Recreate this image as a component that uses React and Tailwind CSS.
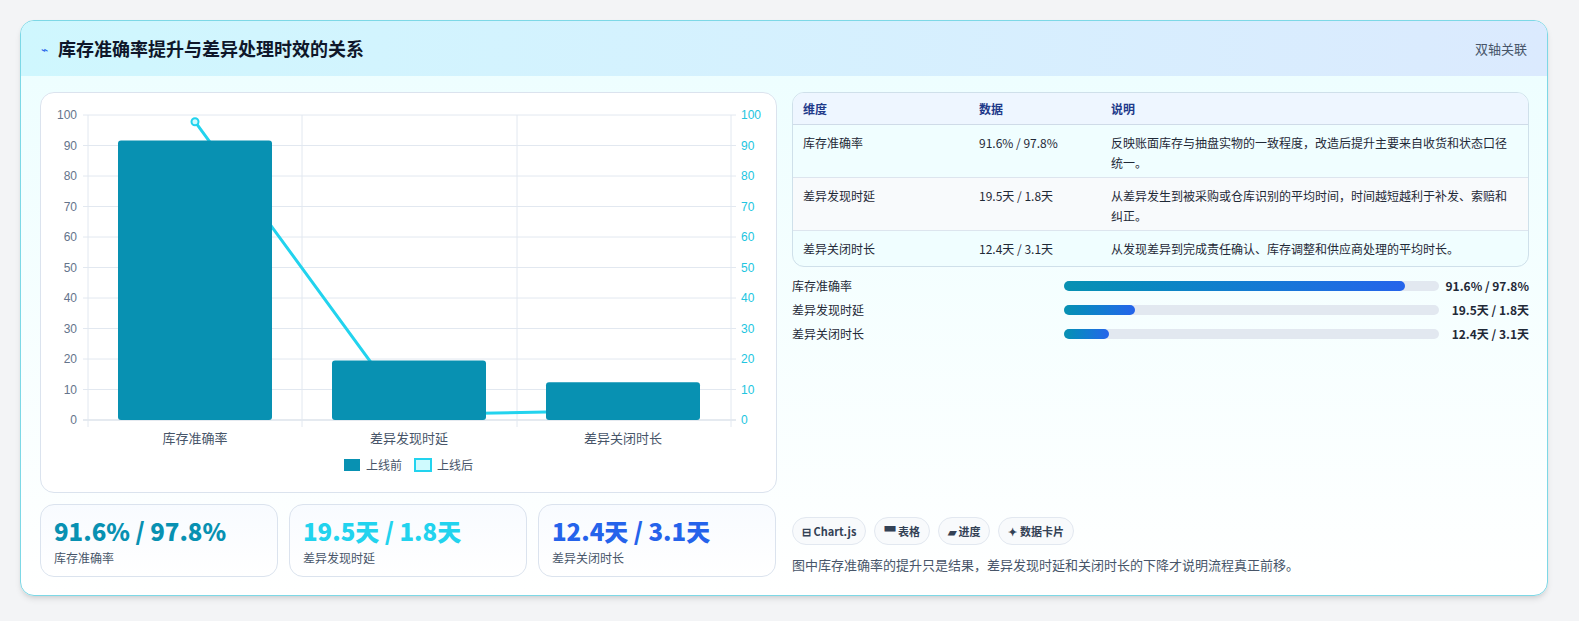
export default function App() {
  const F = { fontFamily: '"Noto Sans CJK SC", "Noto Sans", sans-serif' };
  const y = (v) => 419 - v * 3.05;
  const gridY = [0, 10, 20, 30, 40, 50, 60, 70, 80, 90, 100];
  const bars = [
    { c: 194, v: 91.6, l: "库存准确率" },
    { c: 408, v: 19.5, l: "差异发现时延" },
    { c: 622, v: 12.4, l: "差异关闭时长" },
  ];
  const after = [97.8, 1.8, 3.1];
  const rows = [
    ["库存准确率", "91.6% / 97.8%", "反映账面库存与抽盘实物的一致程度，改造后提升主要来自收货和状态口径统一。"],
    ["差异发现时延", "19.5天 / 1.8天", "从差异发生到被采购或仓库识别的平均时间，时间越短越利于补发、索赔和纠正。"],
    ["差异关闭时长", "12.4天 / 3.1天", "从发现差异到完成责任确认、库存调整和供应商处理的平均时长。"],
  ];
  const prog = [
    ["库存准确率", 91, "91.6% / 97.8%", 272],
    ["差异发现时延", 19, "19.5天 / 1.8天", 274],
    ["差异关闭时长", 12, "12.4天 / 3.1天", 274],
  ];
  return (
    <div className="w-[1579px] h-[621px] bg-[#f3f4f6] pt-[20px] pl-[20px]" style={F}>
      <div className="w-[1528px] h-[576px] rounded-[14px] border border-[#7dd8e6] bg-gradient-to-b from-[#ecfeff] to-white overflow-hidden shadow-md">
        <div className="h-[55px] flex items-center justify-between px-[20px] bg-gradient-to-r from-[#cff7fe] to-[#dbeafe]">
          <div className="flex items-center gap-[10px]">
            <span className="text-[#2563eb] text-[12px]">⌁</span>
            <span className="text-[18px] font-bold text-[#0f172a]">库存准确率提升与差异处理时效的关系</span>
          </div>
          <span className="text-[13px] text-[#475569]">双轴关联</span>
        </div>
        <div className="flex gap-[15px] px-[19px] pt-[16px]">
          <div className="w-[737px] flex flex-col gap-[11px]">
            <div className="h-[401px] rounded-[14px] border border-[#dbe3ee] bg-white relative">
              <svg width="737" height="401" viewBox="40 92 737 401" style={{ fontFamily: '"Liberation Sans", sans-serif' }}>
                {gridY.map((g) => (
                  <g key={g}>
                    <line x1="82" x2="735" y1={y(g)} y2={y(g)} stroke={g === 0 ? "#cbd5e1" : "#e2e8f0"} />
                    <text x="76" y={y(g) + 4} fontSize="12" fill="#64748b" textAnchor="end">{g}</text>
                    <text x="740" y={y(g) + 4} fontSize="12" fill="#22c5e0">{g}</text>
                  </g>
                ))}
                {[87, 301, 516, 730].map((x) => (
                  <line key={x} x1={x} x2={x} y1="114" y2="426" stroke="#e2e8f0" />
                ))}
                <polyline points={bars.map((b, i) => `${b.c},${y(after[i])}`).join(" ")} fill="none" stroke="#22d3ee" strokeWidth="3" />
                <circle cx="194" cy={y(97.8)} r="3.5" fill="#cffafe" stroke="#22d3ee" strokeWidth="2" />
                {bars.map((b) => (
                  <g key={b.l}>
                    <rect x={b.c - 77} y={y(b.v)} width="154" height={b.v * 3.05} rx="3" fill="#0891b2" />
                    <text x={b.c} y="442" fontSize="13" fill="#475569" textAnchor="middle" style={F}>{b.l}</text>
                  </g>
                ))}
                <rect x="343" y="458" width="16" height="12" fill="#0891b2" />
                <text x="365" y="469" fontSize="12" fill="#475569" style={F}>上线前</text>
                <rect x="414" y="458" width="16" height="12" fill="#cffafe" stroke="#22d3ee" strokeWidth="2" />
                <text x="436" y="469" fontSize="12" fill="#475569" style={F}>上线后</text>
              </svg>
            </div>
            <div className="flex gap-[11px]">
              {[
                ["91.6% / 97.8%", "text-[#0891b2]", "库存准确率"],
                ["19.5天 / 1.8天", "text-[#22d3ee]", "差异发现时延"],
                ["12.4天 / 3.1天", "text-[#2563eb]", "差异关闭时长"],
              ].map(([v, c, l]) => (
                <div key={l} className="w-[238px] h-[73px] rounded-[14px] border border-[#dbe3ee] bg-gradient-to-b from-[#f8fbff] to-white px-[13px] pt-[10px]">
                  <div className={`text-[24px] font-extrabold leading-[32px] ${c}`}>{v}</div>
                  <div className="text-[12px] text-[#475569] mt-[2px]">{l}</div>
                </div>
              ))}
            </div>
          </div>
          <div className="w-[738px] flex flex-col">
            <div className="rounded-[12px] border border-[#cfe0ea] overflow-hidden bg-[#f0feff]">
              <div className="flex h-[32px] items-center bg-[#eef6ff] border-b border-[#cfdbe8] text-[12px] font-bold text-[#1e3a8a]">
                <div className="w-[186px] pl-[10px]">维度</div>
                <div className="w-[132px]">数据</div>
                <div>说明</div>
              </div>
              {rows.map((r, i) => (
                <div key={i} className={`flex py-[8px] text-[12px] text-[#1f2937] leading-[20px] ${i < 2 ? "border-b border-[#dde5ee] h-[53px]" : "h-[35px]"} ${i === 1 ? "bg-[#f8fafc]" : ""}`}>
                  <div className="w-[186px] pl-[10px] shrink-0">{r[0]}</div>
                  <div className="w-[132px] shrink-0">{r[1]}</div>
                  <div className="pr-[10px]">{r[2]}</div>
                </div>
              ))}
            </div>
            <div className="flex flex-col gap-[7px] mt-[10px]">
              {prog.map(([l, p, v, w]) => (
                <div key={l} className="flex items-center h-[17px] text-[12px]">
                  <div className="w-[272px] text-[#1f2937]">{l}</div>
                  <div className="h-[10px] rounded-full bg-[#e2e8f0] ml-auto" style={{ width: 375 }}>
                    <div className="h-full rounded-full bg-gradient-to-r from-[#0891b2] to-[#2563eb]" style={{ width: `${p}%` }} />
                  </div>
                  <div className="w-[90px] text-right font-bold text-[#1f2937]">{v}</div>
                </div>
              ))}
            </div>
            <div className="flex gap-[8px] mt-[175px]">
              {["⊟ Chart.js", "▀ 表格", "▰ 进度", "✦ 数据卡片"].map((t) => (
                <span key={t} className="h-[28px] px-[9px] flex items-center rounded-full border border-[#e2e8f0] bg-[#f8fafc] text-[11px] font-bold text-[#334155]">{t}</span>
              ))}
            </div>
            <div className="mt-[10px] text-[13px] text-[#475569]">图中库存准确率的提升只是结果，差异发现时延和关闭时长的下降才说明流程真正前移。</div>
          </div>
        </div>
      </div>
    </div>
  );
}
